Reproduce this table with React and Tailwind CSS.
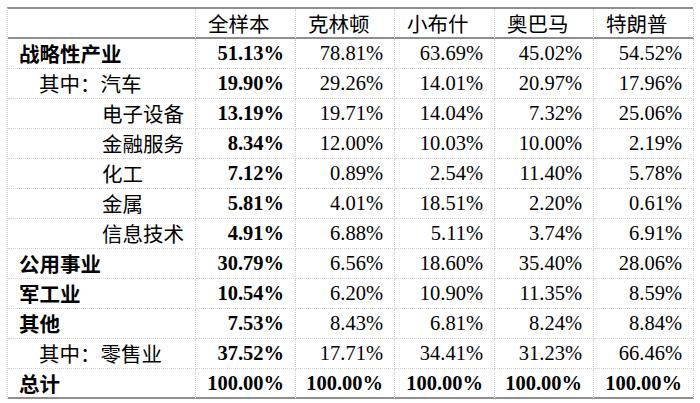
import React from "react";

const cols = ["全样本", "克林顿", "小布什", "奥巴马", "特朗普"];

const rows = [
  { label: "战略性产业", indent: 0, bold: true, v: ["51.13%", "78.81%", "63.69%", "45.02%", "54.52%"] },
  { label: "其中：汽车", indent: 1, v: ["19.90%", "29.26%", "14.01%", "20.97%", "17.96%"] },
  { label: "电子设备", indent: 2, v: ["13.19%", "19.71%", "14.04%", "7.32%", "25.06%"] },
  { label: "金融服务", indent: 2, v: ["8.34%", "12.00%", "10.03%", "10.00%", "2.19%"] },
  { label: "化工", indent: 2, v: ["7.12%", "0.89%", "2.54%", "11.40%", "5.78%"] },
  { label: "金属", indent: 2, v: ["5.81%", "4.01%", "18.51%", "2.20%", "0.61%"] },
  { label: "信息技术", indent: 2, v: ["4.91%", "6.88%", "5.11%", "3.74%", "6.91%"] },
  { label: "公用事业", indent: 0, bold: true, v: ["30.79%", "6.56%", "18.60%", "35.40%", "28.06%"] },
  { label: "军工业", indent: 0, bold: true, v: ["10.54%", "6.20%", "10.90%", "11.35%", "8.59%"] },
  { label: "其他", indent: 0, bold: true, v: ["7.53%", "8.43%", "6.81%", "8.24%", "8.84%"] },
  { label: "其中：零售业", indent: 1, v: ["37.52%", "17.71%", "34.41%", "31.23%", "66.46%"] },
  { label: "总计", indent: 0, bold: true, total: true, v: ["100.00%", "100.00%", "100.00%", "100.00%", "100.00%"] },
];

const indentClass = ["pl-[11px]", "pl-[31px]", "pl-[94px]"];

export default function App() {
  return (
    <div className="w-[700px] h-[403px] bg-white text-black overflow-hidden">
      <div className="ml-[7px] mt-[7px] w-[686px] grid grid-cols-[188px_100px_99px_100px_99px_100px] border-t-2 [border-top-style:solid] border-t-[#8e8e8e] border-l [border-left-style:dotted] border-l-[#d4d4d4] text-[20.5px] leading-none font-['Liberation_Serif','Noto_Sans_CJK_SC',serif]">
        <div className="h-[30px] border-r [border-right-style:dotted] border-r-[#cfcfcf] border-b-2 [border-bottom-style:solid] border-b-[#8e8e8e]"></div>
        {cols.map((c) => (
          <div
            key={c}
            className="h-[30px] flex items-center pl-[12px] border-r [border-right-style:dotted] border-r-[#cfcfcf] border-b-2 [border-bottom-style:solid] border-b-[#8e8e8e] font-['Noto_Sans_CJK_SC',sans-serif]"
          >
            {c}
          </div>
        ))}
        {rows.map((r, ri) => {
          const last = ri === rows.length - 1;
          const bottom = last
            ? "border-b-2 [border-bottom-style:solid] border-b-[#8e8e8e]"
            : "border-b [border-bottom-style:dotted] border-b-[#d2d2d2]";
          return (
            <React.Fragment key={ri}>
              <div
                className={`h-[30px] flex items-center border-r [border-right-style:dotted] border-r-[#cfcfcf] font-['Noto_Sans_CJK_SC',sans-serif] ${bottom} ${indentClass[r.indent]} ${
                  r.bold ? "font-semibold" : "font-normal"
                }`}
              >
                {r.label}
              </div>
              {r.v.map((v, vi) => (
                <div
                  key={vi}
                  className={`h-[30px] flex items-center justify-end pr-[11px] border-r [border-right-style:dotted] border-r-[#cfcfcf] ${bottom} ${
                    vi === 0 || r.total ? "font-bold" : "font-normal"
                  }`}
                >
                  {v}
                </div>
              ))}
            </React.Fragment>
          );
        })}
      </div>
    </div>
  );
}
